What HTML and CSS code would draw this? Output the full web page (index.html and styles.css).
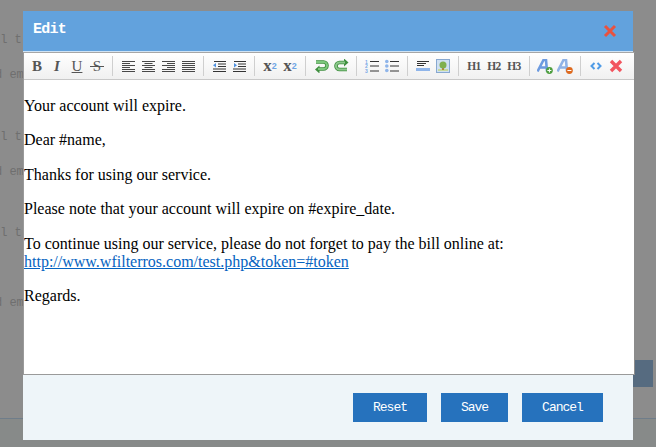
FILE: index.html
```html
<!DOCTYPE html>
<html lang="en">
<head>
<meta charset="utf-8">
<title>Edit</title>
<link rel="stylesheet" href="styles.css">
</head>
<body>
<div class="backdrop">
  <div class="bg-main">
    <div class="bg-line l1 shift-l">ll t</div>
    <div class="bg-line l2 shift-d">d em</div>
    <div class="bg-line l3 shift-l">ll t</div>
    <div class="bg-line l2 shift-d">d em</div>
    <div class="bg-line l4 shift-l">ll t</div>
    <div class="bg-line l5 shift-d">d em</div>
    <div class="bg-btn"></div>
  </div>
  <div class="bg-foot"></div>
</div>

<div class="modal">
  <div class="modal-head">
    <span class="modal-title">Edit</span>
    <svg class="modal-close" width="14" height="14" viewBox="0 0 14 14"><path d="M2 2l10 10M12 2L2 12" stroke="#e9523f" stroke-width="3"/></svg>
  </div>
  <div class="editor">
    <div class="toolbar">
      <span class="tb tx b">B</span>
      <span class="tb tx i">I</span>
      <span class="tb tx u">U</span>
      <span class="tb tx s">S</span>
      <i class="sep"></i>
      <span class="tb"><svg width="13" height="11" viewBox="0 0 13 11"><path d="M0 .5h13M0 2.500h8M0 4.500h13M0 6.500h8M0 8.500h13M0 10.500h13" stroke="#333" stroke-width=".9"/></svg></span>
      <span class="tb"><svg width="13" height="11" viewBox="0 0 13 11"><path d="M0 .5h13M2.500 2.500h8M0 4.500h13M2.500 6.500h8M0 8.500h13M0 10.500h13" stroke="#333" stroke-width=".9"/></svg></span>
      <span class="tb"><svg width="13" height="11" viewBox="0 0 13 11"><path d="M0 .5h13M5 2.500h8M0 4.500h13M5 6.500h8M0 8.500h13M0 10.500h13" stroke="#333" stroke-width=".9"/></svg></span>
      <span class="tb"><svg width="13" height="11" viewBox="0 0 13 11"><path d="M0 .5h13M0 2.500h13M0 4.500h13M0 6.500h13M0 8.500h13M0 10.500h13" stroke="#333" stroke-width=".9"/></svg></span>
      <i class="sep"></i>
      <span class="tb"><svg width="13" height="11" viewBox="0 0 13 11"><path d="M1 .5h12M5 3h8M5 5.500h8M0 8h13M0 10.500h13" stroke="#333"/><path d="M0 4.200l3-2.200v4.400z" fill="#4d90e0"/></svg></span>
      <span class="tb"><svg width="13" height="11" viewBox="0 0 13 11"><path d="M1 .5h12M5 3h8M5 5.500h8M0 8h13M0 10.500h13" stroke="#333"/><path d="M4 4.200L1 2v4.400z" fill="#4d90e0"/></svg></span>
      <i class="sep"></i>
      <span class="tb tx sc">x<sub>2</sub></span>
      <span class="tb tx sc">x<sup>2</sup></span>
      <i class="sep"></i>
      <span class="tb"><svg width="15" height="14" viewBox="0 0 15 14"><path d="M2 3h7.500a3.500 3.500 0 0 1 0 7H4" fill="none" stroke="#3f8f3f" stroke-width="3.600"/><path d="M1 10.500L5.500 6.500v8z" fill="#3f8f3f"/><path d="M2 3h7.500a3.500 3.500 0 0 1 0 7H4" fill="none" stroke="#7cc77c" stroke-width="2"/></svg></span>
      <span class="tb"><svg width="15" height="14" viewBox="0 0 15 14"><path d="M13 10.500H5.500a3.500 3.500 0 0 1 0-7H11" fill="none" stroke="#3f8f3f" stroke-width="3.600"/><path d="M14.500 3.500L10 -.5v8z" fill="#3f8f3f"/><path d="M13 10.500H5.500a3.500 3.500 0 0 1 0-7H11" fill="none" stroke="#8cc78c" stroke-width="2"/></svg></span>
      <i class="sep"></i>
      <span class="tb"><svg width="14" height="14" viewBox="0 0 14 14"><path d="M5 2.500h9M5 7h9M5 12h9" stroke="#333"/><text class="num" x="0" y="4.500">1</text><text class="num" x="0" y="9">2</text><text class="num" x="0" y="13.700">3</text></svg></span>
      <span class="tb"><svg width="14" height="14" viewBox="0 0 14 14"><path d="M5 2.500h9M5 7h9M5 12h9" stroke="#333"/><circle cx="1.800" cy="2.500" r="1.800" fill="#8fb5ea"/><circle cx="1.800" cy="7" r="1.800" fill="#8fb5ea"/><circle cx="1.800" cy="11.500" r="1.800" fill="#8fb5ea"/></svg></span>
      <i class="sep"></i>
      <span class="tb"><svg width="14" height="10" viewBox="0 0 14 10"><path d="M1 .5h12M1 2.500h9M1 4.500h7" stroke="#333"/><rect y="7" width="14" height="3" fill="#8fb5ea"/></svg></span>
      <span class="tb"><svg width="14" height="14" viewBox="0 0 14 14"><rect x=".5" y=".5" width="13" height="13" fill="#cfe0f2" stroke="#87a8d0"/><rect x="2" y="10" width="10" height="2" fill="#c7d99a"/><path d="M6 8h2v3H6z" fill="#b9803f"/><circle cx="7" cy="6" r="3.500" fill="#7fb04f"/></svg></span>
      <i class="sep"></i>
      <span class="tb tx h">H1</span>
      <span class="tb tx h">H2</span>
      <span class="tb tx h">H3</span>
      <i class="sep"></i>
      <span class="tb"><svg width="16" height="15" viewBox="0 0 16 15"><path d="M.5 12.500L6.500 1H9l1 11.500M3 8.500h7" fill="none" stroke="#6d9be0" stroke-width="2.600"/><circle cx="12.400" cy="11.500" r="3.400" fill="#4e9e3f"/><path d="M10.400 11.500h4M12.400 9.500v4" stroke="#fff"/></svg></span>
      <span class="tb"><svg width="16" height="15" viewBox="0 0 16 15"><path d="M.5 12.500L6.500 1H9l1 11.500M3 8.500h7" fill="none" stroke="#8fb2e6" stroke-width="2.600"/><circle cx="12.400" cy="11.500" r="3.400" fill="#de6a1f"/><path d="M10.400 11.500h4" stroke="#fff"/></svg></span>
      <i class="sep"></i>
      <span class="tb"><svg width="12" height="8" viewBox="0 0 12 8"><path d="M4.500 1L1.500 4l3 3M7.500 1l3 3-3 3" fill="none" stroke="#4f9be6" stroke-width="2"/></svg></span>
      <span class="tb"><svg width="14" height="14" viewBox="0 0 14 14"><path d="M2 2l10 10M12 2L2 12" stroke="#f2555f" stroke-width="3.400"/></svg></span>
    </div>
    <div class="content">
      <p>Your account will expire.</p>
      <p>Dear #name,</p>
      <p>Thanks for using our service.</p>
      <p>Please note that your account will expire on #expire_date.</p>
      <p>To continue using our service, please do not forget to pay the bill online at:<br><a href="#">http://www.wfilterros.com/test.php&amp;token=#token</a></p>
      <p>Regards.</p>
    </div>
  </div>
  <div class="modal-foot">
    <button class="btn reset">Reset</button>
    <button class="btn save">Save</button>
    <button class="btn cancel">Cancel</button>
  </div>
</div>
</body>
</html>
```

FILE: styles.css
```css
html, body {
  margin: 0;
  padding: 0;
  height: 447px;
  overflow: hidden;
  background: #8c8c8c;
}

.backdrop {
  display: flex;
  flex-direction: column;
  height: 447px;
  font: 12px/14px "Liberation Mono", monospace;
  color: #6f6f6f;
}
.bg-main {
  height: 418px;
  display: flex;
  flex-direction: column;
  overflow: hidden;
}
.bg-line { height: 14px; white-space: nowrap; }
.shift-l { margin-left: -7px; }
.shift-d { margin-left: -5px; }
.l1 { margin-top: 33px; }
.l2 { margin-top: 21px; }
.l3 { margin-top: 48px; }
.l4 { margin-top: 47px; }
.l5 { margin-top: 56px; }
.bg-btn {
  align-self: flex-end;
  width: 40px;
  height: 27px;
  margin: 50px 3px 0 0;
  background: #566b80;
}
.bg-foot {
  flex: 1;
  border-top: 1px solid #6f7d8a;
  background: #878a89;
}

.modal {
  position: absolute;
  left: 23px;
  top: 11px;
  width: 610px;
  height: 429px;
  display: flex;
  flex-direction: column;
  background: #eef5f9;
}
.modal-head {
  height: 41px;
  flex: none;
  box-sizing: border-box;
  padding: 0 16px 0 10px;
  display: flex;
  align-items: center;
  justify-content: space-between;
  background: #62a2dd;
  border-bottom: 1px solid #cfe3f5;
}
.modal-title {
  font: bold 15px "Liberation Mono", monospace;
  letter-spacing: -.75px;
  color: #fff;
  position: relative;
  top: -2px;
}
.modal-close { display: block; }

.editor {
  width: 612px;
  height: 323px;
  flex: none;
  box-sizing: border-box;
  border: 1px solid #9a9a9a;
  border-top: 1px solid #a6a6a6;
  border-right-color: #8c8c8c;
  display: flex;
  flex-direction: column;
  background: #fff;
}
.toolbar {
  height: 27px;
  flex: none;
  box-sizing: border-box;
  padding-left: 3px;
  display: flex;
  align-items: center;
  background: linear-gradient(#ffffff, #f0f0f0);
  border-bottom: 1px solid #c8c8c8;
}
.tb {
  width: 20px;
  height: 20px;
  flex: none;
  display: flex;
  align-items: center;
  justify-content: center;
}
.sep {
  width: 1px;
  height: 20px;
  flex: none;
  margin: 0 5px;
  background: #cfcfcf;
}
.tx {
  font: bold 15px/20px "Liberation Serif", serif;
  color: #555;
}
.tx.i { font-style: italic; }
.tx.u { text-decoration: underline; font-weight: normal; }
.tx.s { position: relative; font-weight: normal; }
.tx.s::after {
  content: "";
  position: absolute;
  left: 3px;
  right: 3px;
  top: 10px;
  height: 1px;
  background: #555;
}
.tx.h { font-size: 11.5px; letter-spacing: -.5px; }
.tx.sc { font-size: 17px; }
.tx sub, .tx sup {
  font: bold 9px/9px "Liberation Sans", sans-serif;
  color: #6fa5e5;
}
.num {
  font: bold 5px "Liberation Sans", sans-serif;
  fill: #7aa9e6;
}

.content {
  flex: 1;
  overflow: hidden;
  font: 16px/18.4px "Liberation Serif", serif;
  color: #000;
  padding-top: 1px;
}
.content p { margin: 16px 0; }
.content a { color: #0563c1; }

.modal-foot {
  flex: 1;
  display: flex;
  align-items: flex-start;
  padding: 18px 0 0 330px;
  gap: 14px;
}
.btn {
  height: 29px;
  border: 0;
  padding: 0;
  background: #2672bd;
  color: #fff;
  font: 13px "Liberation Mono", monospace;
  letter-spacing: -1px;
}
.reset { width: 74px; }
.save { width: 67px; }
.cancel { width: 81px; }
```
